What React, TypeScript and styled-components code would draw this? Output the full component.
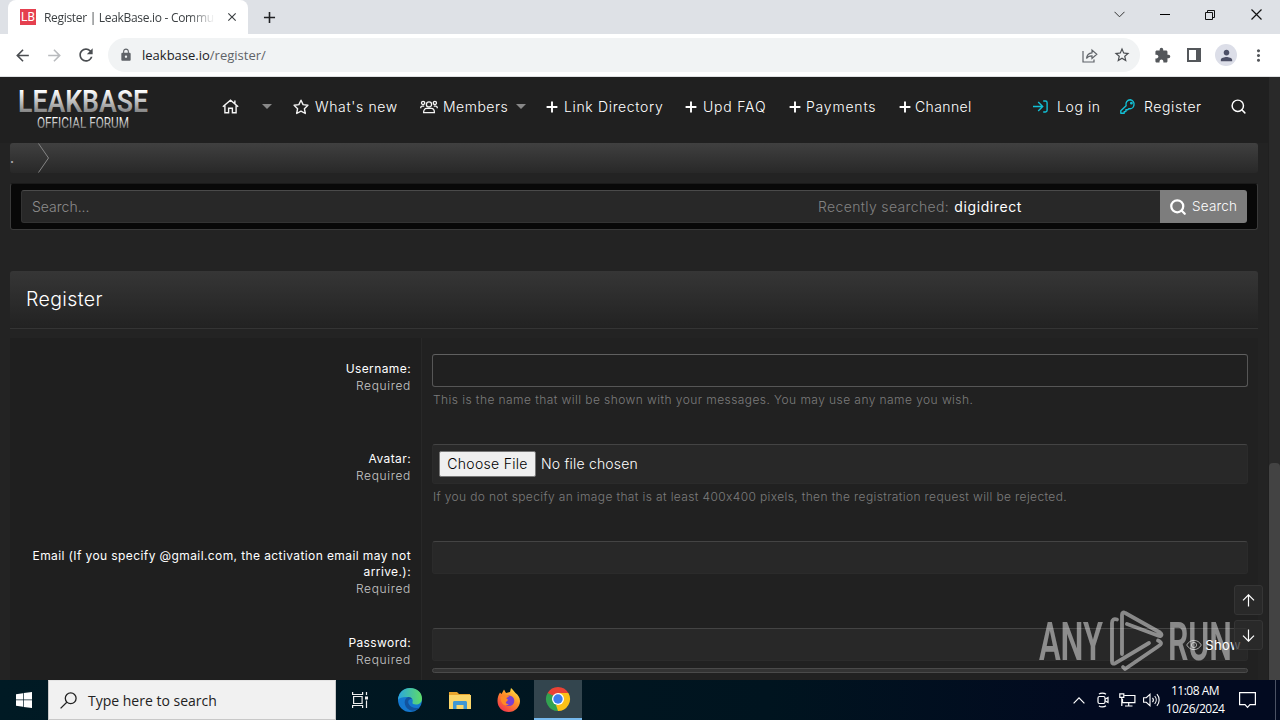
import React from "react";
import styled, { createGlobalStyle } from "styled-components";
import { Search } from "lucide-react";
import {
  MdArrowBack,
  MdArrowForward,
  MdClose,
  MdExtension,
  MdAdd,
  MdLock,
  MdMoreVert,
  MdPerson,
  MdRefresh,
  MdStarBorder,
} from "react-icons/md";

//icons
const HomeIcon = () => (
  <svg width="17" height="15" viewBox="0 0 17 15" fill="none" stroke="#f4f4f4" strokeWidth="1.4">
    <path d="M.8 7.8 8.5 1.2l7.7 6.6M2.9 6.2v7.6h3.7V9.2h3.8v4.6h3.7V6.2M12.9 4.6V1.6" />
  </svg>
);

const StarIcon = () => (
  <svg width="16" height="16" viewBox="0 0 16 16" fill="none" stroke="#f4f4f4" strokeWidth="1.4" strokeLinejoin="round">
    <path d="m8 1.2 2.1 4.4 4.8.7-3.5 3.4.9 4.8L8 12.2l-4.3 2.3.9-4.8L1.1 6.3l4.8-.7z" />
  </svg>
);

const MembersIcon = () => (
  <svg width="18" height="14" viewBox="0 0 18 14" fill="none" stroke="#f4f4f4" strokeWidth="1.3">
    <circle cx="9" cy="4.4" r="2.6" />
    <circle cx="3.1" cy="2.9" r="1.6" />
    <circle cx="14.9" cy="2.9" r="1.6" />
    <path d="M3.6 12.6c0-2.6 1.2-4.2 3-4.2h4.8c1.8 0 3 1.6 3 4.2zM.7 8.2c0-1.6.7-2.1 1.7-2.1h1.8M17.3 8.2c0-1.6-.7-2.1-1.7-2.1h-1.8" />
  </svg>
);

const PlusIcon = () => (
  <svg width="12" height="12" viewBox="0 0 12 12" fill="none" stroke="#fff" strokeWidth="1.9">
    <path d="M6 .6v10.8M.6 6h10.8" />
  </svg>
);

const LoginIcon = () => (
  <svg width="15" height="13" viewBox="0 0 15 13" fill="none" stroke="#12c0d6" strokeWidth="1.4">
    <path d="M0 6.5h9.4M5.2 2l4.5 4.5L5.2 11M10.2 1h2.2c1 0 1.7.7 1.7 1.7v7.6c0 1-.7 1.7-1.7 1.7h-2.2" />
  </svg>
);

const KeyIcon = () => (
  <svg width="16" height="15" viewBox="0 0 16 15" fill="none" stroke="#12c0d6" strokeWidth="1.4" strokeLinejoin="round">
    <path d="M10.3.8a4.5 4.5 0 0 0-4.2 5.9L.8 11.8v2.5h3.4v-1.7h1.7v-1.8h1.8l1-1.1a4.5 4.5 0 1 0 1.6-8.900z" />
    <circle cx="11.4" cy="4.2" r=".7" fill="#12c0d6" />
  </svg>
);

const EyeIcon = () => (
  <svg width="16" height="12" viewBox="0 0 16 12" fill="none" stroke="#a8a8a8" strokeWidth="1">
    <path d="M.7 6C2.4 3 5 1.4 8 1.4S13.6 3 15.3 6C13.6 9 11 10.6 8 10.6S2.4 9 .7 6z" />
    <circle cx="8" cy="6" r="2.6" />
  </svg>
);

const ArrowIcon = ({ down }: { down?: boolean }) => (
  <svg width="13" height="13" viewBox="0 0 13 13" fill="none" stroke="#fff" strokeWidth="1.2">
    {down ? <path d="M6.5 .5v11.5M1 6.7l5.5 5.5L12 6.7" /> : <path d="M6.5 12.5V1M1 6.3 6.5.8 12 6.3" />}
  </svg>
);

const ForumLogo = () => (
  <svg width="132" height="44" viewBox="0 0 132 44">
    <defs>
      <linearGradient id="metal" x1="0" y1="0" x2="0" y2="1">
        <stop offset="0.2" stopColor="#fff" />
        <stop offset="0.85" stopColor="#777" />
      </linearGradient>
    </defs>
    <g fill="url(#metal)" fontFamily="Roboto, sans-serif">
      <text x="1" y="25" fontSize="31" fontWeight="600" textLength="130" lengthAdjust="spacingAndGlyphs">
        LEAKBASE
      </text>
      <text x="20" y="40.5" fontSize="14" fontWeight="400" textLength="92" lengthAdjust="spacingAndGlyphs">
        OFFICIAL FORUM
      </text>
    </g>
  </svg>
);

const AnyRunLogo = () => (
  <svg width="194" height="64" viewBox="0 0 194 64" fill="#fff">
    <g fontFamily="Roboto, sans-serif" fontWeight="600" fontSize="53">
      <text x="0" y="50.5" textLength="64" lengthAdjust="spacingAndGlyphs">
        ANY
      </text>
      <text x="129" y="50.5" textLength="64" lengthAdjust="spacingAndGlyphs">
        RUN
      </text>
    </g>
    <g fill="none" stroke="#fff" strokeWidth="3.8" strokeLinejoin="round" strokeLinecap="round">
      <path d="M78 10.5c-3-1-5 0-5 3.500v38.500c0 2 1.500 2.700 3 1.800L110 34" />
      <path d="M83 45V6c0-2.600 1.300-3.200 3.200-2L121 23.500c2.500 1.700 1.500 4.600-1.500 3.300L88 15" />
      <path d="M119 31.500c4 2 4 3.500 0 6L86 60l-2-2" />
    </g>
  </svg>
);

const EdgeIcon = () => (
  <svg width="26" height="26" viewBox="0 0 26 26">
    <defs>
      <linearGradient id="edgeTop" x1="0" x2="1">
        <stop offset="0" stopColor="#2aa6de" />
        <stop offset="1" stopColor="#5fdc68" />
      </linearGradient>
    </defs>
    <circle cx="13" cy="13" r="12" fill="#1478cf" />
    <path d="M1 13C1.500 5 7 1 13 1c7 0 12 4.500 12 10.500 0 4-3 6-6 6-2.500 0-4-1-3.500-2.300.6-1.400.5-5-4-5.200C6 9.700 2 10.500 1 13z" fill="url(#edgeTop)" />
    <path d="M11.500 10c-5 1-5.500 9.500 1 13 3.500 1.800 8-.2 10.500-2.500-4.500 1.500-9.500 0-11.200-3.500-1.300-2.800-.2-5.200 3-5-.6-1.200-1.800-2-3.300-2z" fill="#12549f" />
  </svg>
);

const FolderIcon = () => (
  <svg width="22" height="19" viewBox="0 0 22 19">
    <path d="M0 1h8l2 2h11v15H0z" fill="#e9a52d" />
    <path d="M0 4h22v14H0z" fill="#fbd66a" />
    <path d="M4 18v-6.500c0-1 .7-1.500 1.500-1.500h11c.8 0 1.500.5 1.500 1.500V18h-3.500v-4h-7v4z" fill="#3f97d4" />
  </svg>
);

const FirefoxIcon = () => (
  <svg width="24" height="24" viewBox="0 0 24 24">
    <defs>
      <linearGradient id="fox" x1=".9" y1="0" x2=".2" y2="1">
        <stop offset="0" stopColor="#fff04a" />
        <stop offset=".45" stopColor="#ff9128" />
        <stop offset="1" stopColor="#f2304e" />
      </linearGradient>
    </defs>
    <path d="M3 4.500 4.500 6 7 1.500 9 5l4-1 1-4c2 2 3 3 4.500 5 2.500 2 4.500 4.500 4.500 8 0 6-5 11-11.200 11C5.500 24 .5 19.500.5 13 .5 9.500 1.500 6.500 3 4.500z" fill="url(#fox)" />
    <circle cx="12" cy="12.800" r="5.300" fill="#7a3fd0" />
    <path d="M3.500 9c3-2 6.500-2 9 0-2 0-3 .6-3.200 1.500 2 .6 2 2 .2 3C8 14.500 9 16.500 12 16c-3 3-8.500 1-8.500-7z" fill="#ff8a25" />
  </svg>
);

const ChromeIcon = () => (
  <svg width="26" height="26" viewBox="0 0 26 26">
    <path d="M13 13 2.600 7A12 12 0 0 1 23.400 7z" fill="#e94235" />
    <path d="M13 13 23.400 7A12 12 0 0 1 13 25z" fill="#fbc116" />
    <path d="M13 13v12A12 12 0 0 1 2.600 7z" fill="#32a350" />
    <path d="M13 7h10.400L18 16z" fill="#fbc116" />
    <path d="m18.200 16-5.200 9-2-6z" fill="#fbc116" />
    <path d="M2.600 7 7.800 16 12 9z" fill="#32a350" />
    <path d="M2.600 7H13v3L7 12z" fill="#e94235" />
    <path d="M2.600 7 7.800 16 9 10z" fill="#32a350" />
    <circle cx="13" cy="13" r="6" fill="#fff" />
    <circle cx="13" cy="13" r="4.700" fill="#3b7ded" />
  </svg>
);

const links = [
  { label: "Link Directory", width: 139, icon: 18, spacing: 0.65 },
  { label: "Upd FAQ", width: 104, icon: 18, spacing: 0.8 },
  { label: "Payments", width: 110, icon: 17, spacing: 0.8 },
  { label: "Channel", width: 90, icon: 16, spacing: 0.4 },
];

const Browser = () => (
  <>
    <TabStrip>
      <Tab>
        <Favicon>LB</Favicon>
        <TabTitle>Register | LeakBase.io - Commun</TabTitle>
        <MdClose size={14} color="#3c4043" />
      </Tab>
      <NewTab>
        <MdAdd size={19} />
      </NewTab>
      <WindowControls>
        <svg width="11" height="7" viewBox="0 0 11 7" fill="none" stroke="#333">
          <path d="m.5.8 5 5 5-5" />
        </svg>
        <svg width="10" height="1" viewBox="0 0 10 1">
          <path d="M0 0h10v1H0z" />
        </svg>
        <svg width="11" height="11" viewBox="0 0 11 11" fill="none" stroke="#111">
          <path d="M.5 3.500h7v7h-7zM2.500 3.500v-2h7v7h-2" />
        </svg>
        <svg width="11" height="11" viewBox="0 0 11 11" fill="none" stroke="#111" strokeWidth="1.200">
          <path d="m.5.5 10 10m0-10-10 10" />
        </svg>
      </WindowControls>
    </TabStrip>
    <Toolbar>
      <ToolIcon>
        <MdArrowBack size={19} color="#4a4d51" />
      </ToolIcon>
      <ToolIcon>
        <MdArrowForward size={19} color="#b9bbbe" />
      </ToolIcon>
      <ToolIcon>
        <MdRefresh size={20} color="#4a4d51" />
      </ToolIcon>
      <AddressBar>
        <MdLock size={14} color="#5f6368" />
        <Url>
          leakbase.io<span>/register/</span>
        </Url>
        <svg width="16" height="15" viewBox="0 0 16 15" fill="none" stroke="#5f6368" strokeWidth="1.200">
          <path d="M1 3v11h11v-2.500M4.500 10.500c.4-4 2.500-5.500 5.500-5.700V2l4.800 4.300L10 10.500V7.800c-2.500 0-4.200.6-5.500 2.700z" />
        </svg>
        <MdStarBorder size={18} color="#4a4d51" />
      </AddressBar>
      <ToolIcon>
        <MdExtension size={17} color="#54575b" />
      </ToolIcon>
      <ToolIcon>
        <svg width="14" height="14" viewBox="0 0 14 14">
          <path d="M0 0h14v14H0zM2 2v10h7V2z" fill="#54575b" fillRule="evenodd" />
        </svg>
      </ToolIcon>
      <ToolIcon>
        <Avatar>
          <MdPerson size={17} color="#4d5066" />
        </Avatar>
      </ToolIcon>
      <ToolIcon>
        <MdMoreVert size={19} color="#54575b" />
      </ToolIcon>
    </Toolbar>
  </>
);

const Header = () => (
  <HeaderWrap>
    <LogoLink>
      <ForumLogo />
    </LogoLink>
    <NavItem width={71}>
      <IconBox width={40}>
        <HomeIcon />
      </IconBox>
      <Caret />
    </NavItem>
    <NavItem width={127}>
      <IconBox width={22}>
        <StarIcon />
      </IconBox>
      <NavText spacing={0.65}>What's new</NavText>
    </NavItem>
    <NavItem width={126}>
      <IconBox width={23}>
        <MembersIcon />
      </IconBox>
      <NavText spacing={0.5}>Members</NavText>
      <Caret />
    </NavItem>
    {links.map(({ label, width, icon, spacing }) => (
      <NavItem key={label} width={width}>
        <IconBox width={icon}>
          <PlusIcon />
        </IconBox>
        <NavText spacing={spacing}>{label}</NavText>
      </NavItem>
    ))}
    <Account>
      <NavItem width={87}>
        <IconBox width={24}>
          <LoginIcon />
        </IconBox>
        <NavText spacing={0.6}>Log in</NavText>
      </NavItem>
      <NavItem width={110}>
        <IconBox width={24}>
          <KeyIcon />
        </IconBox>
        <NavText spacing={0.6}>Register</NavText>
      </NavItem>
      <Search size={17} strokeWidth={2.1} />
    </Account>
  </HeaderWrap>
);

const RegisterForm = () => (
  <Form>
    <Row height={90}>
      <LabelCell>
        <Label>Username:</Label>
        <Required>Required</Required>
      </LabelCell>
      <Field>
        <Input focused />
        <Hint spacing={0.43}>This is the name that will be shown with your messages. You may use any name you wish.</Hint>
      </Field>
    </Row>
    <Row height={97}>
      <LabelCell>
        <Label>Avatar:</Label>
        <Required>Required</Required>
      </LabelCell>
      <Field>
        <FileInput>
          <ChooseFile>Choose File</ChooseFile>
          <FileName>No file chosen</FileName>
        </FileInput>
        <Hint spacing={0.37}>
          If you do not specify an image that is at least 400x400 pixels, then the registration request will be rejected.
        </Hint>
      </Field>
    </Row>
    <Row height={87}>
      <LabelCell>
        <Label>
          Email (If you specify @gmail.com, the activation email may not
          <br />
          arrive.):
        </Label>
        <Required>Required</Required>
      </LabelCell>
      <Field>
        <Input />
      </Field>
    </Row>
    <Row height={68}>
      <LabelCell>
        <Label>Password:</Label>
        <Required>Required</Required>
      </LabelCell>
      <Field>
        <Input>
          <EyeIcon />
          <span>Show</span>
        </Input>
        <Meter />
      </Field>
    </Row>
  </Form>
);

const Taskbar = () => (
  <TaskbarWrap>
    <StartButton>
      <svg width="16" height="16" viewBox="0 0 16 16" fill="#fff">
        <path d="M0 2.200 7 1.200v6.400H0zM7.700 1.100 16 0v7.600H7.700zM0 8.300h7v6.500l-7-1zM7.700 8.300H16V16l-8.300-1.100z" />
      </svg>
    </StartButton>
    <TaskSearch>
      <svg width="17" height="17" viewBox="0 0 17 17" fill="none" stroke="#222" strokeWidth="1.300">
        <circle cx="10.700" cy="6.300" r="5.400" />
        <path d="M6.800 10.200.6 16.400" />
      </svg>
      Type here to search
    </TaskSearch>
    <TaskButtons>
      <TaskButton>
        <svg width="17" height="16" viewBox="0 0 17 16" fill="none" stroke="#eee" strokeWidth="1.200">
          <path d="M.6 0v2.500h10V0M.6 16v-2.500h10V16M1.600 4.500h8.500v7H1.600zM14.500 0v3M14.500 8.500V16" />
          <path d="M13 4.500h3v3h-3z" fill="#eee" stroke="none" />
        </svg>
      </TaskButton>
      <TaskButton>
        <EdgeIcon />
      </TaskButton>
      <TaskButton>
        <FolderIcon />
      </TaskButton>
      <TaskButton>
        <FirefoxIcon />
      </TaskButton>
      <TaskButton active>
        <ChromeIcon />
      </TaskButton>
    </TaskButtons>
    <Tray>
      <svg width="12" height="7" viewBox="0 0 12 7" fill="none" stroke="#fff" strokeWidth="1.200">
        <path d="m.6 6.400 5.400-5.500 5.400 5.500" />
      </svg>
      <svg width="12" height="16" viewBox="0 0 12 16" fill="none" stroke="#fff" strokeWidth="1.200">
        <rect x="1" y="4.500" width="7" height="7" rx="1.500" />
        <path d="m8 7.200 3-1.700v5L8 8.800M2 2.200c1.500-1.500 5-1.500 7 0M2 13.800c1.500 1.500 5 1.500 7 0" />
      </svg>
      <svg width="17" height="14" viewBox="0 0 17 14" fill="none" stroke="#fff" strokeWidth="1.200">
        <path d="M5.500 2.500h10.400v7.200H3.500V6M9.700 9.700V13M6 13h7.500M.8.8h4v3.500h-4zM2.800 4.300V13" />
      </svg>
      <svg width="17" height="14" viewBox="0 0 17 14" fill="none" stroke="#fff" strokeWidth="1.100">
        <path d="M.6 4.700h2.700L7 1.300v11.400L3.300 9.300H.6zM9.500 4.800c1 1.200 1 3.200 0 4.400M11.700 3c2 2.300 2 5.700 0 8M13.900 1.200c3 3.300 3 8.300 0 11.600" />
      </svg>
    </Tray>
    <Clock>
      11:08 AM
      <span>10/26/2024</span>
    </Clock>
    <svg width="17" height="17" viewBox="0 0 17 17" fill="none" stroke="#fff" strokeWidth="1.200">
      <path d="M.6.6h15.800v12H11l-2.500 2.800L6 12.600H.6z" />
    </svg>
    <ShowDesktop />
  </TaskbarWrap>
);

const App = () => {
  return (
    <Screen>
      <GlobalStyle />
      <Browser />
      <Viewport>
        <Page>
          <Header />
          <Breadcrumb>
            <Crumb>.</Crumb>
            <svg width="14" height="30" viewBox="0 0 14 30" fill="none" stroke="#858585">
              <path d="m1.500.5 10 14.500-10 14.500" />
            </svg>
          </Breadcrumb>
          <SearchPanel>
            <SearchField>
              <Placeholder>Search...</Placeholder>
              <Recent>
                Recently searched: <span>digidirect</span>
              </Recent>
            </SearchField>
            <SearchButton>
              <Search size={18} strokeWidth={3} />
              <span>Search</span>
            </SearchButton>
          </SearchPanel>
          <PageTitle>Register</PageTitle>
          <RegisterForm />
        </Page>
        <Scrollbar>
          <Thumb />
        </Scrollbar>
        <Watermark>
          <AnyRunLogo />
        </Watermark>
        <ScrollButtons>
          <ScrollButton>
            <ArrowIcon />
          </ScrollButton>
          <ScrollButton>
            <ArrowIcon down />
          </ScrollButton>
        </ScrollButtons>
      </Viewport>
      <Taskbar />
    </Screen>
  );
};

export default App;

const GlobalStyle = createGlobalStyle`
  * {
    box-sizing: border-box;
  }

  body {
    margin: 0;
    overflow: hidden;
  }

  svg {
    flex: none;
    display: block;
  }
`;

const Screen = styled.div`
  width: 1280px;
  height: 720px;
  display: flex;
  flex-direction: column;
  overflow: hidden;
  white-space: nowrap;
  font-family: Inter, "Noto Sans", sans-serif;
`;

const TabStrip = styled.div`
  height: 34px;
  flex: none;
  padding-left: 8px;
  display: flex;
  background-color: #dee1e6;
`;

const Tab = styled.div`
  width: 240px;
  padding: 0 9px 0 12px;
  display: flex;
  align-items: center;
  background-color: #fff;
  border-radius: 8px 8px 0 0;
`;

const Favicon = styled.div`
  width: 16px;
  height: 16px;
  display: flex;
  justify-content: center;
  align-items: center;
  background-color: #e5404f;
  color: #fff;
  font-family: Roboto, sans-serif;
  font-size: 12px;
  font-weight: 400;
`;

const TabTitle = styled.div`
  width: 171px;
  margin: 0 11px 0 8px;
  overflow: hidden;
  font-family: "Open Sans", sans-serif;
  font-size: 12px;
  letter-spacing: -0.3px;
  color: #3c4043;
  mask-image: linear-gradient(90deg, #000 145px, transparent 171px);
`;

const NewTab = styled.div`
  margin-left: 12px;
  display: flex;
  align-items: center;
  color: #202124;
`;

const WindowControls = styled.div`
  margin-left: auto;
  padding: 0 18px 6px 0;
  display: flex;
  align-items: center;
  gap: 35px;
`;

const Toolbar = styled.div`
  height: 43px;
  flex: none;
  padding: 0 6px;
  display: flex;
  align-items: center;
  background-color: #fff;
  border-bottom: 1px solid #dfe1e3;
`;

const ToolIcon = styled.div`
  width: 32px;
  display: flex;
  justify-content: center;
`;

const AddressBar = styled.div`
  flex: 1;
  height: 34px;
  margin: 0 6px;
  padding: 0 9px 0 11px;
  display: flex;
  align-items: center;
  gap: 15px;
  border-radius: 17px;
  background-color: #f1f3f4;
`;

const Url = styled.div`
  flex: 1;
  margin-left: -6px;
  font-family: "Open Sans", sans-serif;
  font-size: 13px;
  color: #202124;

  span {
    color: #5f6368;
  }
`;

const Avatar = styled.div`
  width: 22px;
  height: 22px;
  display: flex;
  justify-content: center;
  align-items: center;
  border-radius: 50%;
  background-color: #dcdee8;
`;

const Viewport = styled.main`
  position: relative;
  height: 603px;
  flex: none;
  display: flex;
  overflow: hidden;
  background-color: #232323;
  color: #fff;
`;

const Page = styled.div`
  width: 1268px;
  padding: 0 10px;
  font-weight: 300;
`;

const HeaderWrap = styled.header`
  height: 66px;
  margin: 0 -10px;
  padding-bottom: 7px;
  display: flex;
  align-items: center;
  background-color: #202020;
`;

const LogoLink = styled.div`
  width: 222px;
  padding: 5px 0 0 17px;
`;

const NavItem = styled.div<{ width: number }>`
  width: ${({ width }) => width}px;
  display: flex;
  align-items: center;
`;

const IconBox = styled.div<{ width: number }>`
  width: ${({ width }) => width}px;
  flex: none;
`;

const NavText = styled.span<{ spacing: number }>`
  font-size: 14px;
  letter-spacing: ${({ spacing }) => spacing}px;
`;

const Caret = styled.i`
  margin-left: 8px;
  border: 5px solid transparent;
  border-top-color: #888;
  border-bottom: 0;

  ${IconBox} + & {
    margin-left: 0;
  }
`;

const Account = styled.div`
  margin-left: auto;
  padding-right: 21px;
  display: flex;
  align-items: center;
`;

const Breadcrumb = styled.div`
  width: 1248px;
  height: 30px;
  display: flex;
  border-radius: 3px;
  background: linear-gradient(#404040, #282828);
`;

const Crumb = styled.div`
  width: 27px;
  padding-top: 10px;
  font-size: 12px;
  line-height: 12px;
  font-weight: 700;
  color: #aaa;
`;

const SearchPanel = styled.div`
  width: 1248px;
  height: 47px;
  margin-top: 10px;
  padding: 6px 10px;
  display: flex;
  border: 1px solid #3a3a3a;
  border-top-color: #1a1a1a;
  border-radius: 3px;
  background-color: #080808;
`;

const SearchField = styled.div`
  flex: 1;
  height: 33px;
  padding: 0 138px 1px 10px;
  display: flex;
  justify-content: space-between;
  align-items: center;
  border: 1px solid #333;
  border-top-color: #4a4a4a;
  border-right: 0;
  border-radius: 3px 0 0 3px;
  background-color: #282828;
  font-size: 14px;
`;

const Placeholder = styled.span`
  color: #8c8c8c;
`;

const Recent = styled.span`
  color: #828282;
  letter-spacing: 0.35px;

  span {
    margin-left: 1px;
    color: #fff;
    letter-spacing: 0.6px;
    font-weight: 400;
  }
`;

const SearchButton = styled.div`
  width: 87px;
  height: 33px;
  padding-left: 9px;
  display: flex;
  align-items: center;
  gap: 5px;
  border-radius: 0 3px 3px 0;
  background-color: #7d7d7d;
  font-size: 13.5px;

  span {
    padding-bottom: 1px;
    letter-spacing: 0.2px;
  }
`;

const PageTitle = styled.h1`
  width: 1248px;
  height: 58px;
  margin: 41px 0 9px;
  padding: 0 16px 2px;
  display: flex;
  align-items: center;
  border-bottom: 1px solid #343434;
  border-radius: 3px 3px 0 0;
  background: linear-gradient(#363636, #222);
  font-size: 19.5px;
  font-weight: 350;
  letter-spacing: 0.4px;
`;

const Form = styled.div`
  width: 1248px;
  background-color: #1f1f1f;
`;

const Row = styled.div<{ height: number }>`
  height: ${({ height }) => height}px;
  display: flex;
`;

const LabelCell = styled.div`
  width: 412px;
  padding: 23px 10px 0 0;
  border-right: 1px solid #282828;
  text-align: right;
  font-size: 12px;
`;

const Label = styled.div`
  line-height: 16px;
  font-weight: 400;
  letter-spacing: 0.4px;
`;

const Required = styled.div`
  line-height: 17px;
  color: #c8c8c8;
  letter-spacing: 0.65px;
`;

const Field = styled.div`
  width: 836px;
  padding: 16px 10px 0;
  background-color: #212121;
`;

const Input = styled.div<{ focused?: boolean }>`
  height: 33px;
  padding-right: 6px;
  display: flex;
  justify-content: flex-end;
  align-items: center;
  gap: 3px;
  border: 1px solid ${({ focused }) => (focused ? "#565656" : "#2b2b2b")};
  border-top-color: ${({ focused }) => (focused ? "#606060" : "#444")};
  border-radius: 3px;
  background-color: ${({ focused }) => (focused ? "#202020" : "#282828")};
  font-size: 13px;
  font-weight: 400;
  letter-spacing: 0.4px;
`;

const Hint = styled.div<{ spacing: number }>`
  margin: 5px 0 0 1px;
  font-size: 12px;
  line-height: 16px;
  color: #7c7c7c;
  letter-spacing: ${({ spacing }) => spacing}px;
`;

const FileInput = styled.div`
  height: 40px;
  padding: 0 6px 1px;
  display: flex;
  align-items: center;
  gap: 5px;
  border: 1px solid #2b2b2b;
  border-top-color: #444;
  border-radius: 3px;
  background-color: #282828;
`;

const ChooseFile = styled.div`
  width: 97px;
  height: 26px;
  padding-bottom: 1px;
  display: flex;
  justify-content: center;
  align-items: center;
  border: 1px solid #767676;
  border-radius: 2px;
  background-color: #efefef;
  color: #000;
  font-size: 14px;
  font-weight: 350;
  letter-spacing: 0.3px;
`;

const FileName = styled.span`
  padding-bottom: 1px;
  font-size: 14px;
  font-weight: 350;
  letter-spacing: 0.2px;
`;

const Meter = styled.div`
  height: 5px;
  margin-top: 7px;
  border: 1px solid #4a4a4a;
  border-radius: 3px;
  background-color: #333;
`;

const Scrollbar = styled.div`
  width: 12px;
  padding-top: 386px;
  background-color: #292929;
  border-left: 1px solid #202020;
`;

const Thumb = styled.div`
  height: 218px;
  border-radius: 4px 4px 0 0;
  background-color: #434343;
`;

const Watermark = styled.div`
  position: absolute;
  left: 1039px;
  top: 532px;
  opacity: 0.47;
`;

const ScrollButtons = styled.div`
  position: absolute;
  right: 17px;
  bottom: 30px;
  display: flex;
  flex-direction: column;
  gap: 5px;
`;

const ScrollButton = styled.div`
  width: 29px;
  height: 30px;
  padding-right: 1px;
  display: flex;
  justify-content: center;
  align-items: center;
  border: 1px solid #353535;
  border-radius: 3px;
  background-color: rgba(44, 44, 44, 0.75);
`;

const TaskbarWrap = styled.footer`
  height: 40px;
  flex: none;
  display: flex;
  align-items: center;
  background: linear-gradient(90deg, #001a24, #00141f 60%, #020a20 85%);
`;

const StartButton = styled.div`
  width: 48px;
  display: flex;
  justify-content: center;
`;

const TaskSearch = styled.div`
  width: 288px;
  height: 40px;
  padding: 1px 0 0 11px;
  display: flex;
  align-items: center;
  gap: 11px;
  border: 1px solid #c8c8c8;
  border-top-color: #e4e4e4;
  background-color: #f1f1f1;
  color: #222;
  font-family: "Open Sans", sans-serif;
  font-size: 14px;
`;

const TaskButtons = styled.div`
  display: flex;
  gap: 0.5px;
`;

const TaskButton = styled.div<{ active?: boolean }>`
  width: ${({ active }) => (active ? 48 : 49)}px;
  height: 40px;
  display: flex;
  justify-content: center;
  align-items: center;
  background-color: ${({ active }) => (active ? "#33454e" : "transparent")};
  border-bottom: ${({ active }) => (active ? "2px solid #76b9ed" : "none")};
`;

const Tray = styled.div`
  margin-left: auto;
  display: flex;
  align-items: center;
  gap: 10px;

  svg:last-child {
    margin-left: -3px;
  }

  svg:nth-child(2) {
    margin-left: 2px;
  }
`;

const Clock = styled.div`
  width: 58px;
  margin: 0 15px 0 6px;
  display: flex;
  flex-direction: column;
  align-items: center;
  color: #fff;
  font-family: "Open Sans", sans-serif;
  font-size: 12px;
  line-height: 18px;
  letter-spacing: -0.5px;
`;

const ShowDesktop = styled.i`
  width: 5px;
  height: 40px;
  margin-left: 19px;
  border-left: 1px solid #4b5264;
`;
